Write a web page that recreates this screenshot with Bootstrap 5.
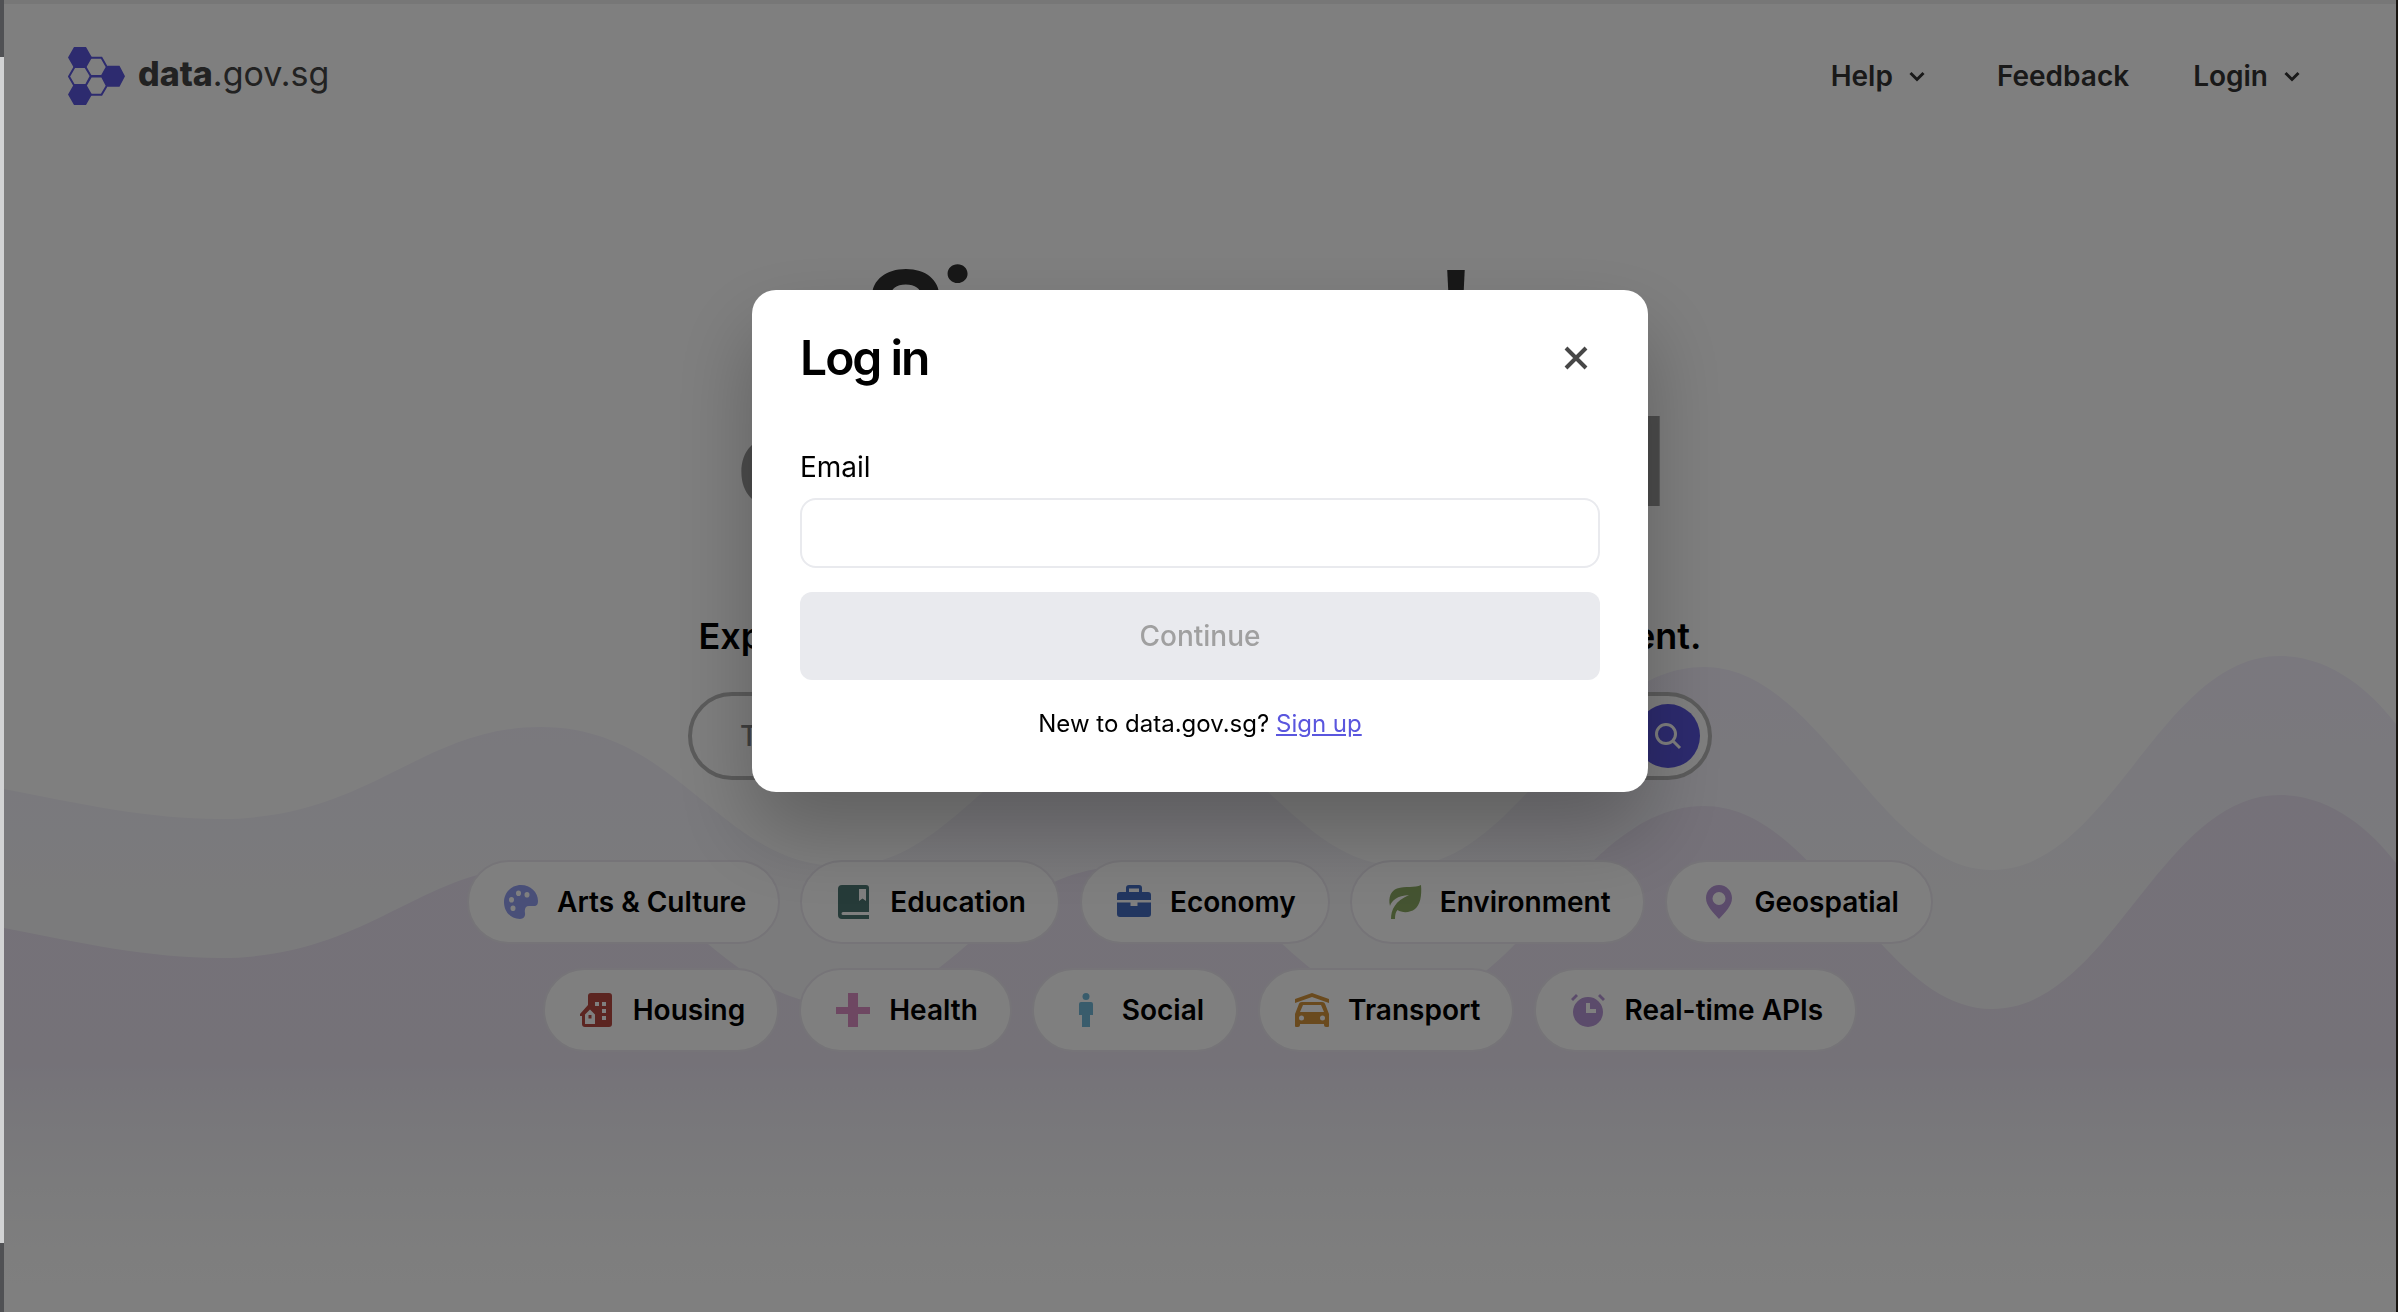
<!DOCTYPE html>
<html lang="en">
<head>
<meta charset="utf-8">
<meta name="viewport" content="width=device-width, initial-scale=1">
<title>data.gov.sg</title>
<link href="https://cdn.jsdelivr.net/npm/bootstrap@5.3.0/dist/css/bootstrap.min.css" rel="stylesheet">
<style>
  html, body { height: 100%; }
  body { font-family: Inter, "Liberation Sans", sans-serif; color: #000; overflow: hidden; background: linear-gradient(#505154 57px, #d2d3d4 57px, #d2d3d4 1243px, #505154 1243px); }
  .site { min-height: 100%; margin: 0 2px 0 4px; background: #fff; border-top: 4px solid #efefef; position: relative; }
  .desk-edge { position: absolute; top: 0; bottom: 0; right: 0; width: 2px; background: #17130f; z-index: 1060; }
  .waves { position: absolute; left: 0; top: -4px; width: 100%; height: 1312px; }
  .site-header { padding: 43px 88px 0 64px; }
  .brand-link { gap: 12px; font-size: 34px; line-height: 40px; color: #444; text-decoration: none; }
  .brand-link span { padding-bottom: 4px; }
  .brand-link b { font-weight: 800; }
  .top-nav { gap: 64px; }
  .top-link { font-size: 28px; line-height: 40px; font-weight: 600; color: #333; background: none; border: 0; padding: 0; text-decoration: none; }
  .hero-title { font-size: 124px; line-height: 146px; font-weight: 700; letter-spacing: -5px; color: #303030; margin: 137px 0 0; }
  .hero-title span { color: #999; letter-spacing: -4px; }
  .hero-sub { font-size: 36px; line-height: 48px; font-weight: 600; margin: 78px 0 0; }
  .search-box { width: 1024px; height: 88px; border: 4px solid #b8b8b8; border-radius: 44px; background: #fff; margin-top: 32px; padding: 0 8px 0 48px; }
  .search-box input { border: 0; outline: 0; padding: 0; font-size: 28px; font-weight: 500; background: none; }
  .search-box input::placeholder { color: #808080; }
  .search-go { width: 64px; height: 64px; border: 0; border-radius: 50%; background: #5a56de; }
  .topics { gap: 24px; margin-top: 80px; }
  .topic-row { gap: 20px; }
  .topic { height: 84px; border: 2px solid #ece9f0; background: #fff; border-radius: 42px; padding: 0 32px; gap: 16px; font-size: 28px; font-weight: 600; color: #000; text-decoration: none; }
  .topic svg { width: 40px; height: 40px; flex: none; }
  .modal-backdrop { --bs-backdrop-opacity: .5; left: 4px; right: 2px; width: auto; }
  .login-layer { left: 4px; right: 2px; width: auto; }
  .login-dialog { max-width: 896px; margin: 290px auto 0; }
  .login-card { border: 0; border-radius: 24px; padding: 40px 48px 52px; box-shadow: 0 40px 80px rgba(0, 0, 0, .25); }
  .login-title { font-size: 48px; line-height: 56px; font-weight: 600; margin: 0; letter-spacing: -2px; }
  .close-x { width: 48px; height: 48px; border: 0; background: none; padding: 0; }
  .email-label { font-size: 28px; line-height: 40px; margin: 61px 0 11px; }
  .email-input { height: 70px; border: 2px solid #e9eaee; border-radius: 16px; font-size: 28px; }
  .go-btn, .go-btn:disabled { height: 88px; margin-top: 24px; border: 0; border-radius: 12px; background: #e9eaee; color: #a0a0a0; opacity: 1; font-size: 28px; font-weight: 500; }
  .signup-line { font-size: 24px; line-height: 32px; margin: 28px 0 0; }
  .signup-line a { color: #5a56de; }
</style>
<script src="https://cdn.jsdelivr.net/npm/bootstrap@5.3.0/dist/js/bootstrap.bundle.min.js"></script>
</head>
<body class="modal-open">
<div class="site">
  <svg class="waves" viewBox="4 0 2392 1312" preserveAspectRatio="none" aria-hidden="true">
    <defs>
      <linearGradient id="w1" gradientUnits="userSpaceOnUse" x1="0" y1="660" x2="0" y2="1240"><stop offset="0" stop-color="#f4f0fc"/><stop offset=".3" stop-color="#f5f4fa"/><stop offset=".45" stop-color="#f7f7f8"/><stop offset="1" stop-color="#f7f7f8"/></linearGradient>
      <linearGradient id="w2" gradientUnits="userSpaceOnUse" x1="0" y1="790" x2="0" y2="1312"><stop offset="0" stop-color="#eae3f2"/><stop offset=".52" stop-color="#eae4f1"/><stop offset=".62" stop-color="#f0eef5"/><stop offset=".76" stop-color="#f7f7f9"/><stop offset=".9" stop-color="#fdfdfd"/><stop offset="1" stop-color="#fff"/></linearGradient>
    </defs>
    <path fill="url(#w1)" d="M4 789C80 804 150 819 220 819C370 819 420 727 541 727C680 727 720 866 841 866C960 866 990 727 1130 727C1260 727 1290 866 1404 866C1520 866 1580 667 1704 667C1820 667 1880 870 1992 870C2110 870 2160 656 2280 656C2330 656 2370 690 2396 724V1240H4Z"/>
    <path fill="url(#w2)" d="M4 928C80 943 150 958 220 958C370 958 420 866 541 866C680 866 720 1005 841 1005C960 1005 990 866 1130 866C1260 866 1290 1005 1404 1005C1520 1005 1580 806 1704 806C1820 806 1880 1009 1992 1009C2110 1009 2160 795 2280 795C2330 795 2370 829 2396 863V1312H4Z"/>
  </svg>
  <div class="position-relative">
    <header class="site-header d-flex align-items-center justify-content-between">
      <a href="#" class="brand-link d-flex align-items-center">
        <svg width="58" height="58" viewBox="0 0 58 58" aria-hidden="true">
          <g fill="none" stroke="#5a56de" stroke-width="2"><path d="M1 29.500l5.500-9.500h11l5.500 9.500-5.500 9.500h-11zM23 10.800h10.500l5.300 9.200-5 9h-11l-5.500-9M22.500 29.500h11.500l4.800 9.200-5.300 9H23M17.500 39l5-9.500"/></g>
          <g fill="#5a56de"><path d="M0 10.500L6 0h12l6 10.500L18 21H6zM0 47.500L6 37h12l6 10.500L18 58H6zM34 29.200l5.500-10.500h12l5.500 10.500-5.500 10.500h-12z"/></g>
        </svg>
        <span><b>data</b>.gov.sg</span>
      </a>
      <nav class="top-nav d-flex align-items-center">
        <button class="top-link d-flex align-items-center gap-2" type="button">Help <svg width="32" height="32" viewBox="0 0 32 32" fill="none" stroke="#333" stroke-width="3" aria-hidden="true"><path d="M9.500 13l6.500 6.500L22.500 13"/></svg></button>
        <a class="top-link" href="#">Feedback</a>
        <button class="top-link d-flex align-items-center gap-2" type="button">Login <svg width="32" height="32" viewBox="0 0 32 32" fill="none" stroke="#333" stroke-width="3" aria-hidden="true"><path d="M9.500 13l6.500 6.500L22.500 13"/></svg></button>
      </nav>
    </header>
    <main class="d-flex flex-column align-items-center text-center">
      <h1 class="hero-title">Singapore's<br><span>open data portal</span></h1>
      <p class="hero-sub">Explore and download 5,000+ datasets from government.</p>
      <form class="search-box d-flex align-items-center">
        <input class="flex-grow-1" type="search" placeholder="Try searching for a dataset" aria-label="Search datasets">
        <button class="search-go d-flex align-items-center justify-content-center" type="button" aria-label="Search"><svg width="32" height="32" viewBox="0 0 32 32" fill="none" stroke="#fff" stroke-width="3"><circle cx="14" cy="14" r="9.500"/><path d="M21 21l7 7"/></svg></button>
      </form>
      <div class="topics d-flex flex-column align-items-center">
        <div class="topic-row d-flex">
          <a class="topic d-flex align-items-center" href="#"><svg viewBox="-1 0 40 40"><path fill="#939ff0" fill-rule="evenodd" d="M19 3C9.500 3 2 10.500 2 20s6.500 17 16 17c4 0 5.500-3 5-6-.700-4 .500-7 4-7h5c3 0 4-2 4-5C36 10 28.500 3 19 3zM16.500 8.500a2.500 2.800 0 1 1 0 5.600 2.500 2.800 0 0 1 0-5.600zM25 10a2.500 2.800 0 1 1 0 5.600A2.500 2.800 0 0 1 25 10zM9.500 15a2.500 2.800 0 1 1 0 5.600 2.500 2.800 0 0 1 0-5.600zM11 23.500a2.500 2.800 0 1 1 0 5.600 2.500 2.800 0 0 1 0-5.600z"/></svg>Arts &amp; Culture</a>
          <a class="topic d-flex align-items-center" href="#"><svg viewBox="0 0 40 40"><path fill="#4c7672" fill-rule="evenodd" d="M8 3h24a3 3 0 0 1 3 3v24H9a1.500 1.500 0 0 0 0 3h26v4H8a4 4 0 0 1-4-4V7a4 4 0 0 1 4-4zM25 7v12l3.500-2.500L32 19V7z"/></svg>Education</a>
          <a class="topic d-flex align-items-center" href="#"><svg viewBox="0 0 40 40"><path fill="#446cc0" fill-rule="evenodd" d="M12 10V6a3 3 0 0 1 3-3h10a3 3 0 0 1 3 3v4h6a3 3 0 0 1 3 3v5H3v-5a3 3 0 0 1 3-3zm3 0h10V6.500H15zM3 20.500h13.500V24h7v-3.500H37V32a3 3 0 0 1-3 3H6a3 3 0 0 1-3-3z"/></svg>Economy</a>
          <a class="topic d-flex align-items-center" href="#"><svg viewBox="-2 0 40 40"><path fill="#8ba963" d="M35 3c1 11-1 20-6 24-5 4-13 4-17.500 1-2 2-2.500 5-2.500 9H5c0-9 4-18 18-24C11 14 6 18 4 24 2 15 5 9 11 6.500 19 4 29 6 35 3z"/></svg>Environment</a>
          <a class="topic d-flex align-items-center" href="#"><svg viewBox="0 0 40 40"><path fill="#b796d6" fill-rule="evenodd" d="M20 3C12.500 3 7 9 7 16c0 8 7 14 13 21 6-7 13-13 13-21 0-7-5.500-13-13-13zm0 7a6.500 6.500 0 1 1 0 13 6.500 6.500 0 0 1 0-13z"/></svg>Geospatial</a>
        </div>
        <div class="topic-row d-flex">
          <a class="topic d-flex align-items-center" href="#"><svg viewBox="-2 0 40 40"><path fill="#b84a43" fill-rule="evenodd" d="M12 3h18a3 3 0 0 1 3 3v28a3 3 0 0 1-3 3H6a3 3 0 0 1-3-3v-8H1v-2l8-9V6a3 3 0 0 1 3-3zM16 12v4h4v-4zm7 0v4h4v-4zm0 7v4h4v-4zm0 7v4h4v-4zM6 24.500V34h10v-9.500l-5-5zm3.500.500h3v3.500h-3z"/></svg>Housing</a>
          <a class="topic d-flex align-items-center" href="#"><svg viewBox="-1 0 40 40"><path fill="#dd8fc4" d="M14 3h10v14h12v7H24v13H14V24H2v-7h12z"/></svg>Health</a>
          <a class="topic d-flex align-items-center" href="#"><svg viewBox="0 0 40 40"><g fill="#73b9d8"><circle cx="20" cy="6.500" r="3.500"/><path d="M15 12h10a2 2 0 0 1 2 2v11h-3v12h-8V25h-3V14a2 2 0 0 1 2-2z"/></g></svg>Social</a>
          <a class="topic d-flex align-items-center" href="#"><svg viewBox="0 0 40 40"><path fill="#d4953c" fill-rule="evenodd" d="M20 3l17 6v4L20 7 3 13V9zM10 12h20c2 0 3 1 3.500 3l3.500 9v12a1 1 0 0 1-1 1h-2a2 2 0 0 1-2-2v-1H8v1a2 2 0 0 1-2 2H4a1 1 0 0 1-1-1V24l3.500-9C7 13 8 12 10 12zm1 3l-3 7h24l-3-7zM9.500 25.500a2.500 2.500 0 1 0 0 5 2.500 2.500 0 0 0 0-5zm21 0a2.500 2.500 0 1 0 0 5 2.500 2.500 0 0 0 0-5z"/></svg>Transport</a>
          <a class="topic d-flex align-items-center" href="#"><svg viewBox="0 0 40 40"><path fill="#b796d6" fill-rule="evenodd" d="M20 7a15 15 0 1 1 0 30 15 15 0 0 1 0-30zm-2 6v10h10v-4h-6v-6zM8 4l2 2-5 5-2-2zM32 4l-2 2 5 5 2-2z"/></svg>Real-time APIs</a>
        </div>
      </div>
    </main>
  </div>
</div>
<div class="modal-backdrop show"></div>
<div class="modal d-block login-layer" tabindex="-1" role="dialog" aria-modal="true" aria-labelledby="loginTitle">
  <div class="modal-dialog login-dialog">
    <div class="modal-content login-card">
      <div class="d-flex align-items-center justify-content-between">
        <h2 class="login-title" id="loginTitle">Log in</h2>
        <button class="close-x" type="button" aria-label="Close"><svg width="48" height="48" viewBox="0 0 48 48" fill="none" stroke="#474747" stroke-width="4"><path d="M14 14l20 20M34 14L14 34"/></svg></button>
      </div>
      <form class="d-flex flex-column">
        <label class="email-label" for="email">Email</label>
        <input class="form-control email-input" id="email" type="email">
        <button class="btn w-100 go-btn" type="submit" disabled>Continue</button>
      </form>
      <p class="signup-line text-center">New to data.gov.sg? <a href="#">Sign up</a></p>
    </div>
  </div>
</div>
<div class="desk-edge"></div>
</body>
</html>
